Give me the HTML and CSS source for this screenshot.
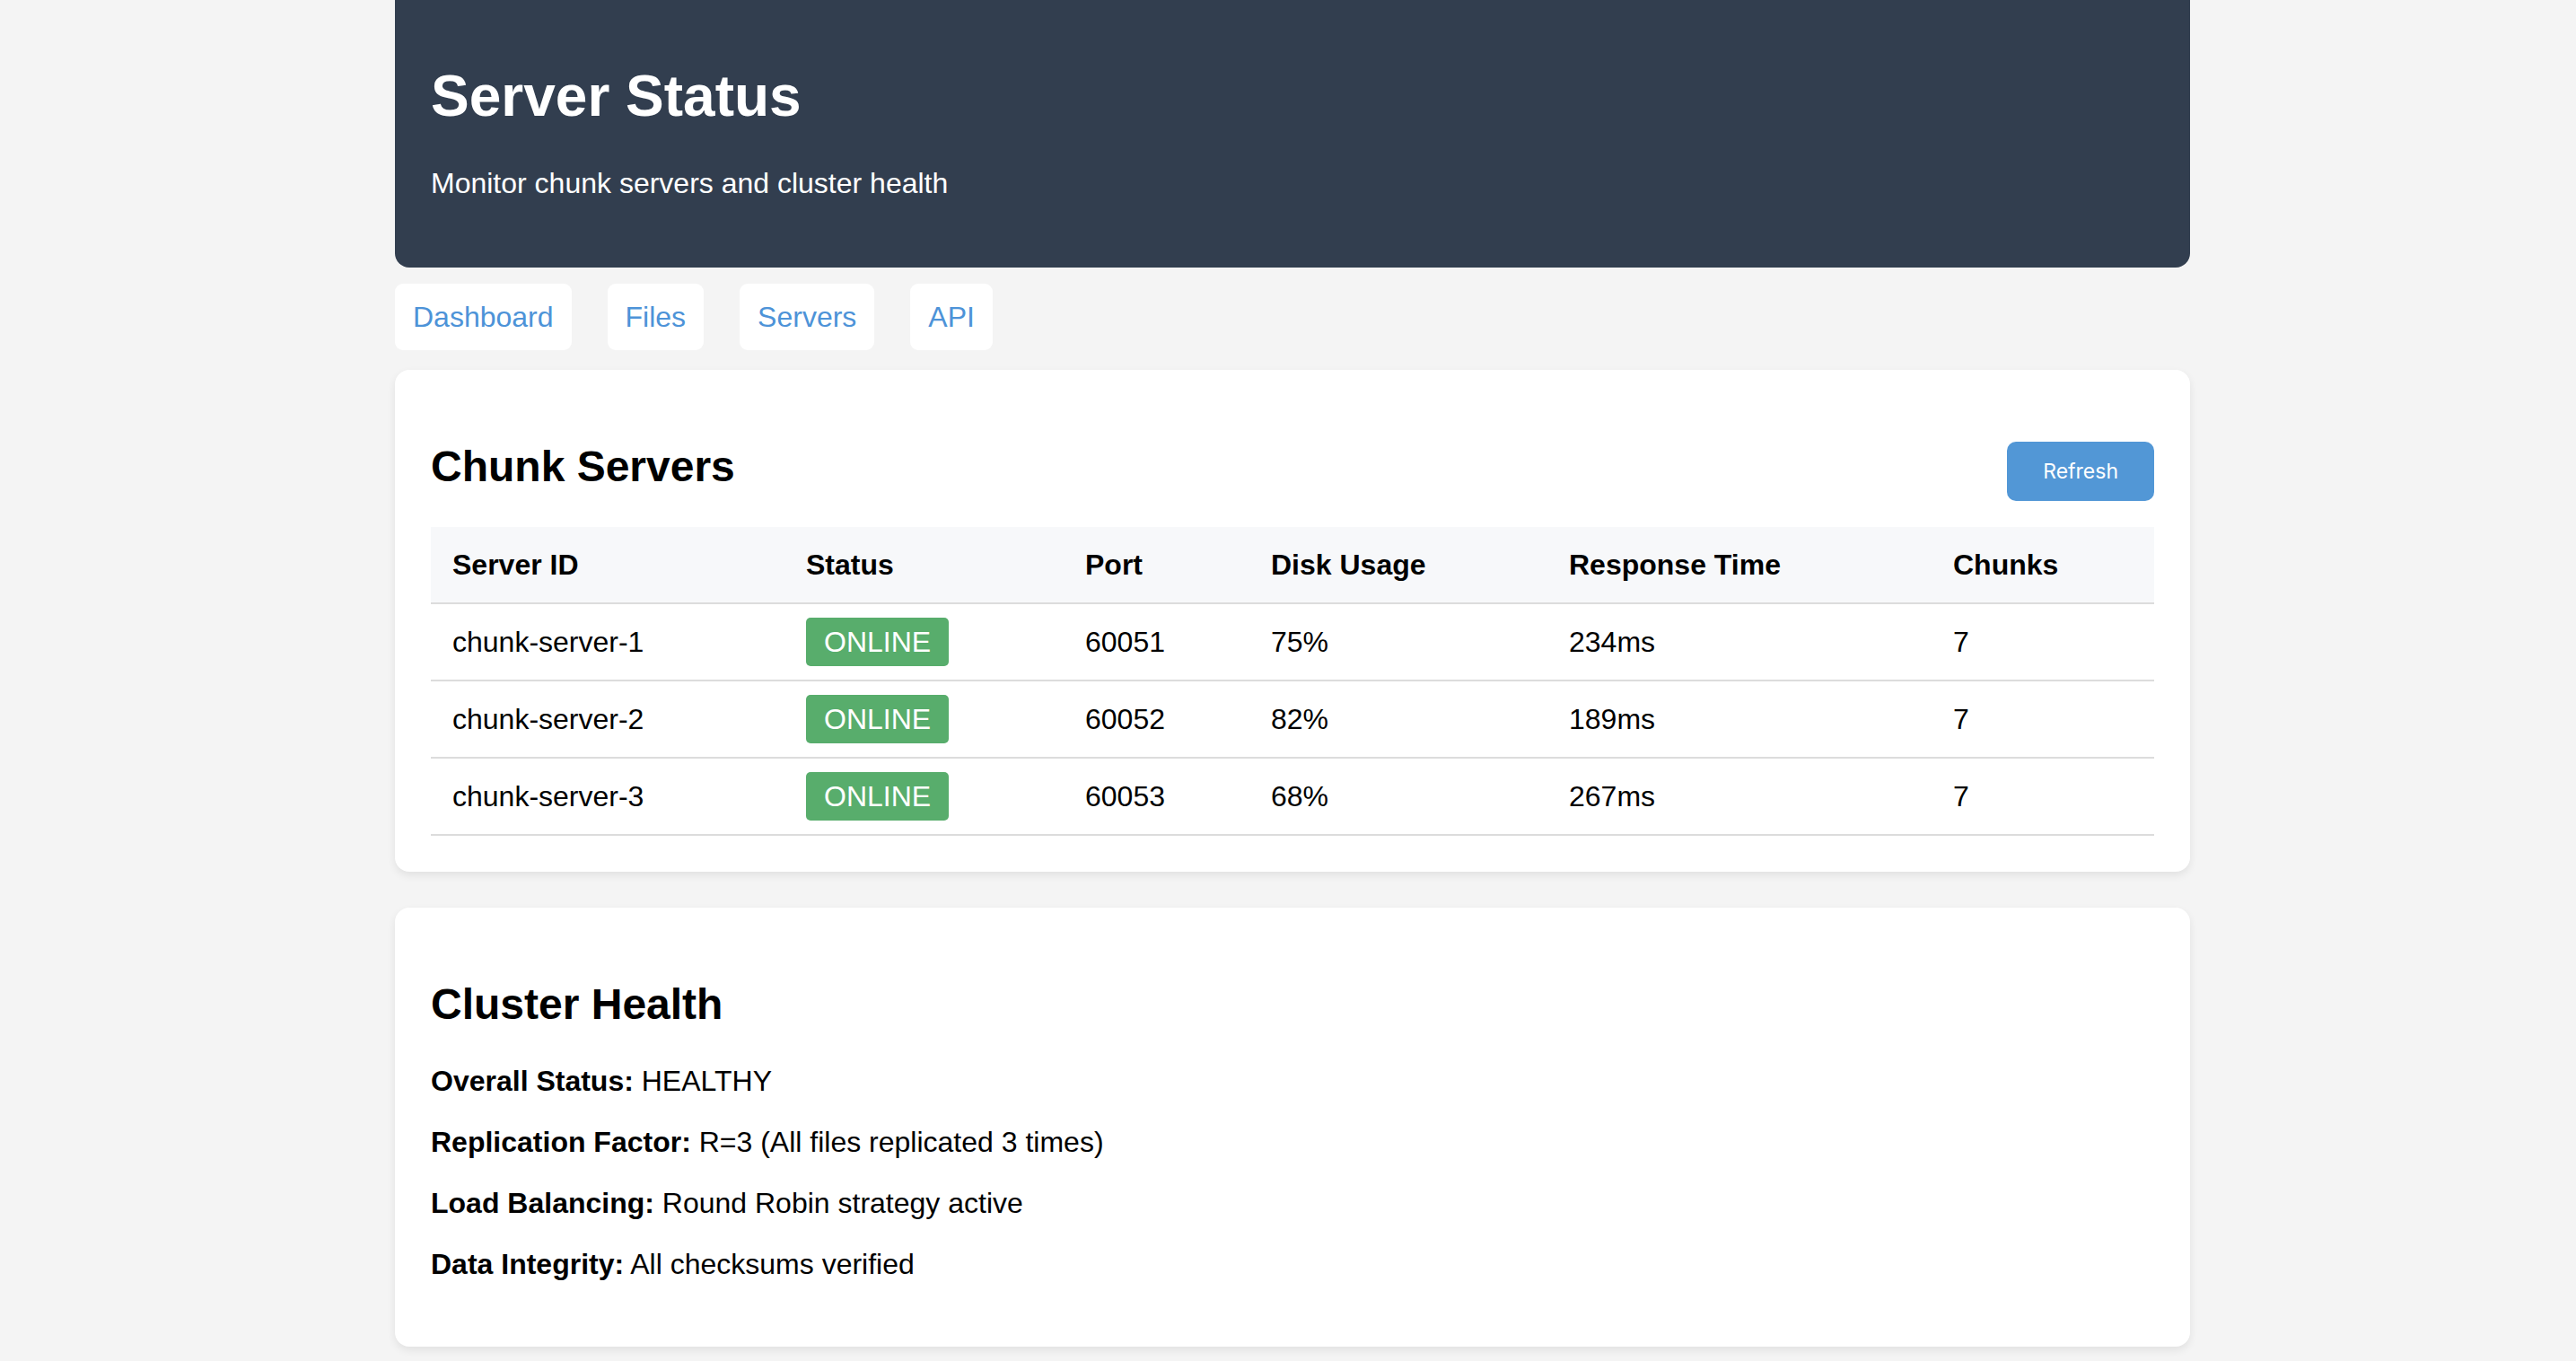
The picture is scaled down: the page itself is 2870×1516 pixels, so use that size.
FILE: index.html
```html
<!DOCTYPE html>
<html lang="en">
<head>
<meta charset="utf-8">
<title>Server Status</title>
<link rel="stylesheet" href="styles.css">
</head>
<body>
<div class="page">
  <header class="hero">
    <h1>Server Status</h1>
    <p>Monitor chunk servers and cluster health</p>
  </header>
  <nav class="nav">
    <a class="nav-link" href="#">Dashboard</a>
    <a class="nav-link" href="#">Files</a>
    <a class="nav-link" href="#">Servers</a>
    <a class="nav-link" href="#">API</a>
  </nav>
  <section class="card">
    <div class="card-head">
      <h2>Chunk Servers</h2>
      <button class="btn">Refresh</button>
    </div>
    <table class="servers">
      <colgroup>
        <col class="c-id"><col class="c-status"><col class="c-port"><col class="c-disk"><col class="c-resp"><col class="c-chunks">
      </colgroup>
      <thead>
        <tr><th>Server ID</th><th>Status</th><th>Port</th><th>Disk Usage</th><th>Response Time</th><th>Chunks</th></tr>
      </thead>
      <tbody>
        <tr><td>chunk-server-1</td><td><span class="badge">ONLINE</span></td><td>60051</td><td>75%</td><td>234ms</td><td>7</td></tr>
        <tr><td>chunk-server-2</td><td><span class="badge">ONLINE</span></td><td>60052</td><td>82%</td><td>189ms</td><td>7</td></tr>
        <tr><td>chunk-server-3</td><td><span class="badge">ONLINE</span></td><td>60053</td><td>68%</td><td>267ms</td><td>7</td></tr>
      </tbody>
    </table>
  </section>
  <section class="card card-health">
    <h2>Cluster Health</h2>
    <p><strong>Overall Status:</strong> HEALTHY</p>
    <p><strong>Replication Factor:</strong> R=3 (All files replicated 3 times)</p>
    <p><strong>Load Balancing:</strong> Round Robin strategy active</p>
    <p><strong>Data Integrity:</strong> All checksums verified</p>
  </section>
</div>
</body>
</html>
```

FILE: styles.css
```css
html, body {
  margin: 0;
  background: #f4f4f4;
}
body {
  padding: 0 0 0 10px;
  font-family: "Liberation Sans", Arial, Helvetica, sans-serif;
  font-size: 32px;
  color: #000;
}
.page {
  width: 2000px;
  margin: 0 auto;
}
.hero {
  background: #323e4f;
  color: #fff;
  padding: 27px 40px 43px;
  border-radius: 0 0 16px 16px;
}
.hero h1 {
  font-size: 64px;
  font-weight: bold;
  margin: 43px 0 42px;
}
.hero p {
  margin: 32px 0;
  font-size: 32px;
}
.nav {
  display: flex;
  gap: 40px;
  margin-top: 18px;
}
.nav-link {
  display: flex;
  align-items: center;
  height: 74px;
  padding: 0 20px;
  background: #fff;
  border-radius: 9px;
  color: #4d93d8;
  text-decoration: none;
  font-size: 32px;
}
.card {
  background: #fff;
  border-radius: 16px;
  padding: 40px;
  margin-top: 22px;
  box-shadow: 0 4px 10px rgba(0, 0, 0, 0.08);
}
.card-health {
  margin-top: 40px;
  margin-bottom: 40px;
  padding-bottom: 42px;
}
.card h2 {
  font-size: 48px;
  font-weight: bold;
  margin: 40px 0;
}
.card-head {
  display: flex;
  justify-content: space-between;
  align-items: flex-start;
}
.btn {
  margin-top: 40px;
  height: 66px;
  padding: 0 40px;
  border: none;
  border-radius: 10px;
  background: #5297d6;
  color: #fff;
  font-family: Inter, "Open Sans", sans-serif;
  font-size: 23px;
}
.servers {
  width: 100%;
  border-collapse: collapse;
  table-layout: fixed;
}
.c-id { width: 394px; }
.c-status { width: 311px; }
.c-port { width: 207px; }
.c-disk { width: 332px; }
.c-resp { width: 428px; }
.c-chunks { width: 248px; }
.servers th,
.servers td {
  padding: 24px;
  text-align: left;
  line-height: 36px;
  border-bottom: 2px solid #dcdcdc;
}
.servers th {
  background: #f7f8fa;
  font-weight: bold;
}
.badge {
  display: inline;
  background: #58ad6c;
  color: #fff;
  padding: 9px 20px;
  border-radius: 5px;
}
.card-health p {
  margin: 32px 0;
  line-height: 36px;
}
```
